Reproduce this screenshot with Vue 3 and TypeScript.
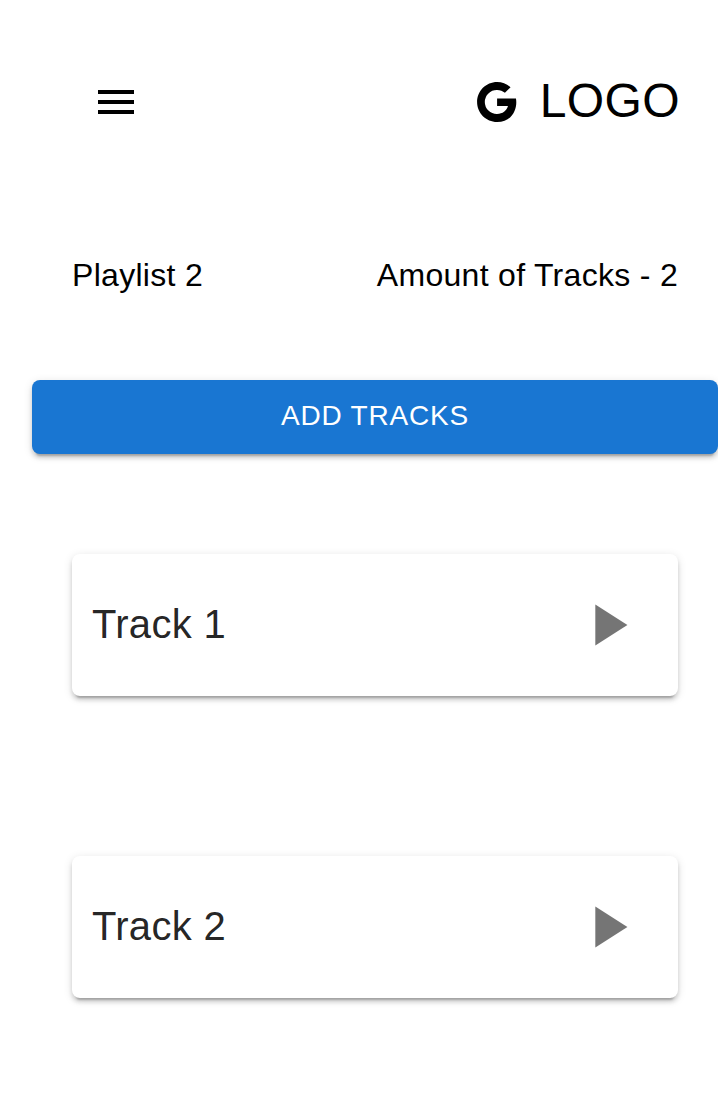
<script setup lang="ts">
const tracks: string[] = ['Track 1', 'Track 2']
</script>

<template>
  <main class="page">
    <header class="header">
      <button class="menu" aria-label="Menu">
        <svg viewBox="0 0 24 24"><path d="M3 18h18v-2H3v2zm0-5h18v-2H3v2zm0-7v2h18V6H3z" /></svg>
      </button>
      <div class="brand">
        <svg viewBox="0 0 24 24"><path d="M12.545 10.239v3.821h5.445c-.712 2.315-2.647 3.972-5.445 3.972a6.033 6.033 0 1 1 0-12.064c1.498 0 2.866.549 3.921 1.453l2.814-2.814A9.969 9.969 0 0 0 12.545 2C7.021 2 2.543 6.477 2.543 12s4.478 10 10.002 10c8.396 0 10.249-7.85 9.426-11.748l-9.426-.013z" /></svg>
        <span class="brand-name">LOGO</span>
      </div>
    </header>
    <div class="summary">
      <span>Playlist 2</span>
      <span>Amount of Tracks - 2</span>
    </div>
    <button class="add">ADD TRACKS</button>
    <ul class="tracks">
      <li v-for="track in tracks" :key="track" class="card">
        <span class="title">{{ track }}</span>
        <button class="play" :aria-label="'Play ' + track">
          <svg viewBox="0 0 24 24"><path d="M8 5v14l11-7z" /></svg>
        </button>
      </li>
    </ul>
  </main>
</template>

<style>
body { background: #fff; }
</style>

<style scoped>
.page {
  box-sizing: border-box;
  height: 1098px;
  padding-left: 32px;
  overflow: hidden;
  font-family: "Liberation Sans", Arial, sans-serif;
  color: #000;
}
button { border: 0; padding: 0; background: none; font: inherit; color: inherit; }
svg { display: block; fill: currentColor; }
.header {
  display: flex;
  justify-content: space-between;
  align-items: center;
  height: 204px;
  padding: 0 38px 0 60px;
}
.menu svg { width: 48px; height: 48px; }
.brand {
  display: flex;
  align-items: center;
  gap: 20px;
  font-size: 48px;
  line-height: 64px;
  letter-spacing: 0.4px;
}
.brand svg { width: 48px; height: 48px; }
.brand-name { padding-bottom: 2px; }
.summary {
  display: flex;
  justify-content: space-between;
  align-items: center;
  height: 48px;
  margin-top: 47px;
  padding: 0 40px;
  font-size: 32px;
  letter-spacing: 0.3px;
}
.add {
  display: block;
  width: 100%;
  height: 74px;
  margin-top: 81px;
  padding-bottom: 2px;
  border-radius: 8px;
  background: #1976d2;
  color: #fff;
  font-size: 28px;
  letter-spacing: 0.8px;
  box-shadow: 0 6px 2px -4px rgba(0,0,0,.2), 0 4px 4px 0 rgba(0,0,0,.14), 0 2px 10px 0 rgba(0,0,0,.12);
}
.tracks {
  display: flex;
  flex-direction: column;
  gap: 160px;
  margin: 100px 40px 0;
  padding: 0;
  list-style: none;
}
.card {
  box-sizing: border-box;
  display: flex;
  justify-content: space-between;
  align-items: center;
  height: 142px;
  padding: 0 36px 0 20px;
  border-radius: 8px;
  color: rgba(0,0,0,.87);
  font-size: 40px;
  letter-spacing: 0.3px;
  box-shadow: 0 6px 2px -4px rgba(0,0,0,.2), 0 4px 4px 0 rgba(0,0,0,.14), 0 2px 10px 0 rgba(0,0,0,.12);
}
.title { padding-bottom: 2px; }
.play { color: rgba(0,0,0,.54); }
.play svg { width: 70px; height: 70px; }
</style>
